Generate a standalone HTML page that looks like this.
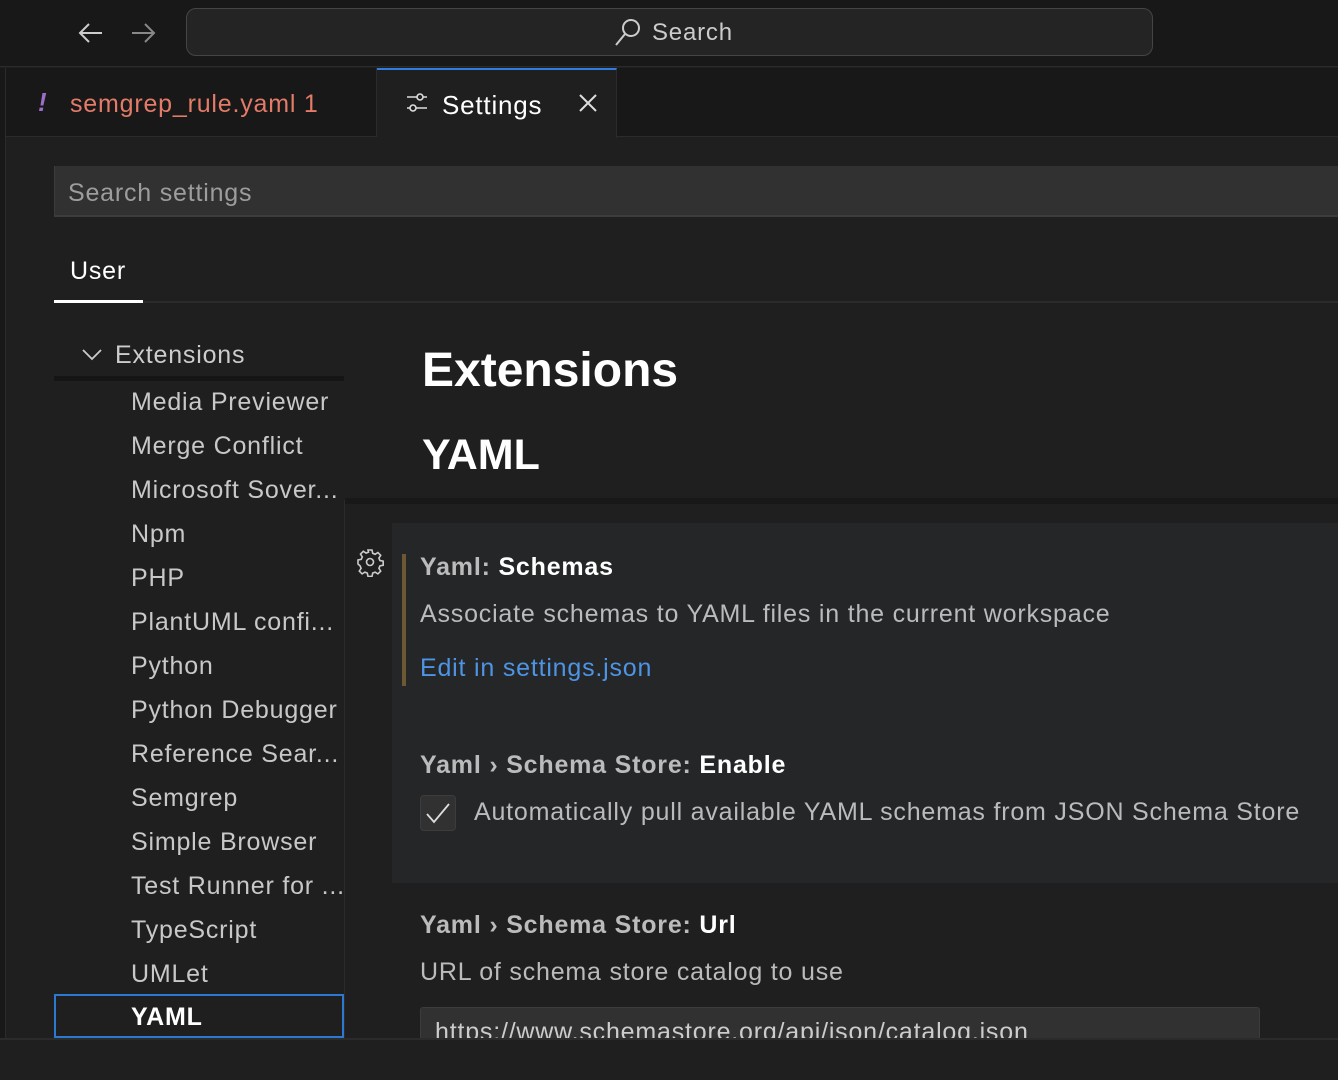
<!DOCTYPE html>
<html><head><meta charset="utf-8"><style>
*{margin:0;padding:0;box-sizing:border-box}
body{width:1338px;height:1080px;overflow:hidden;background:#1f1f1f;font-family:"Liberation Sans",sans-serif;color:#ccc;position:relative;letter-spacing:0.8px}
.a{position:absolute;white-space:nowrap}
</style></head><body>
<!-- title bar -->
<div class="a" style="left:0;top:0;width:1338px;height:67px;background:#181818;border-bottom:1px solid #2b2b2b"></div>
<svg class="a" style="left:76px;top:20px" width="30" height="26" viewBox="0 0 30 26"><path d="M26 13H4M13 4L4 13L13 22" stroke="#ccc" stroke-width="2" fill="none"/></svg>
<svg class="a" style="left:128px;top:20px" width="30" height="26" viewBox="0 0 30 26"><path d="M4 13H26M17 4L26 13L17 22" stroke="#888" stroke-width="2" fill="none"/></svg>
<div class="a" style="left:186px;top:8px;width:967px;height:48px;background:#242424;border:1.5px solid #454545;border-radius:10px"></div>
<svg class="a" style="left:613px;top:17px" width="30" height="30" viewBox="0 0 30 30"><circle cx="18" cy="11" r="8" stroke="#ccc" stroke-width="2" fill="none"/><path d="M12 17L3 28" stroke="#ccc" stroke-width="2"/></svg>
<div class="a" style="left:652px;top:19px;font-size:24px;color:#ccc">Search</div>
<!-- tabs -->
<div class="a" style="left:0;top:68px;width:1338px;height:69px;background:#181818;border-bottom:1px solid #2b2b2b"></div>
<div class="a" style="left:0;top:68px;width:6px;height:972px;background:#181818;border-right:1px solid #2b2b2b"></div>
<div class="a" style="left:6px;top:68px;width:371px;height:69px;border-right:1px solid #2b2b2b"></div>
<div class="a" style="left:38px;top:87px;font-size:26px;color:#9c6ec8;font-style:italic;font-weight:bold">!</div>
<div class="a" style="left:70px;top:90px;font-size:25px;color:#e37b68">semgrep_rule.yaml 1</div>
<div class="a" style="left:377px;top:68px;width:240px;height:70px;background:#1f1f1f;border-top:2px solid #2f7de1;border-right:1px solid #2b2b2b"></div>
<svg class="a" style="left:405px;top:92px" width="24" height="22" viewBox="0 0 24 22"><path d="M2 5H22M2 16H22" stroke="#ddd" stroke-width="1.6"/><circle cx="15" cy="5" r="3" fill="#1f1f1f" stroke="#ddd" stroke-width="1.6"/><circle cx="8" cy="16" r="3" fill="#1f1f1f" stroke="#ddd" stroke-width="1.6"/></svg>
<div class="a" style="left:442px;top:90px;font-size:26px;color:#fff">Settings</div>
<svg class="a" style="left:577px;top:92px" width="22" height="22" viewBox="0 0 22 22"><path d="M3 3L19 19M19 3L3 19" stroke="#ddd" stroke-width="2"/></svg>
<!-- search settings -->
<div class="a" style="left:54px;top:166px;width:1290px;height:51px;background:#313131;border-bottom:2px solid #3c3c3c;border-left:1px solid #3c3c3c"></div>
<div class="a" style="left:68px;top:179px;font-size:25px;color:#9d9d9d">Search settings</div>
<div class="a" style="left:70px;top:257px;font-size:25px;color:#fff">User</div>
<div class="a" style="left:54px;top:301px;width:1290px;height:2px;background:#2b2b2b"></div>
<div class="a" style="left:54px;top:300px;width:89px;height:3px;background:#fff"></div>
<!-- sidebar -->
<svg class="a" style="left:80px;top:345px" width="24" height="20" viewBox="0 0 24 20"><path d="M3 5L12 14L21 5" stroke="#ccc" stroke-width="1.8" fill="none"/></svg>
<div class="a" style="left:115px;top:341px;font-size:25px;color:#ccc">Extensions</div>
<div class="a" style="left:54px;top:376px;width:290px;height:5px;background:#151515"></div>
<div class="a" style="left:344px;top:500px;width:1px;height:540px;background:#2b2b2b"></div>
<div class="a" style="left:131px;top:380px;font-size:25px;line-height:44px;color:#c8c8c8">
Media Previewer<br>Merge Conflict<br>Microsoft Sover...<br>Npm<br>PHP<br>PlantUML confi...<br>Python<br>Python Debugger<br>Reference Sear...<br>Semgrep<br>Simple Browser<br>Test Runner for ...<br>TypeScript<br>UMLet</div>
<div class="a" style="left:54px;top:994px;width:290px;height:44px;border:2px solid #2b79d1"></div>
<div class="a" style="left:131px;top:1003px;font-size:25px;font-weight:bold;color:#fff">YAML</div>
<!-- headings -->
<div class="a" style="left:422px;top:343px;font-size:48px;font-weight:bold;color:#fff;letter-spacing:0">Extensions</div>
<div class="a" style="left:422px;top:431px;font-size:43px;font-weight:bold;color:#fff;letter-spacing:0">YAML</div>
<div class="a" style="left:345px;top:498px;width:1000px;height:6px;background:#181818"></div>
<!-- cards -->
<div class="a" style="left:392px;top:523px;width:946px;height:360px;background:#252628"></div>
<svg class="a" style="left:355px;top:547px" width="30" height="30" viewBox="0 0 30 30"><g stroke="#ccc" stroke-width="1.6" fill="none"><circle cx="15" cy="15" r="3.5"/><path d="M13 3h4l.7 3.3 2.4 1 2.8-1.8 2.8 2.8-1.8 2.8 1 2.4 3.3.7v4l-3.3.7-1 2.4 1.8 2.8-2.8 2.8-2.8-1.8-2.4 1-.7 3.3h-4l-.7-3.3-2.4-1-2.8 1.8-2.8-2.8 1.8-2.8-1-2.4L3 17v-4l3.3-.7 1-2.4-1.8-2.8 2.8-2.8 2.8 1.8 2.4-1z"/></g></svg>
<div class="a" style="left:402px;top:554px;width:4px;height:132px;background:#6d5834"></div>
<div class="a" style="left:420px;top:553px;font-size:25px;font-weight:bold;color:#bbb">Yaml: <span style="color:#fff">Schemas</span></div>
<div class="a" style="left:420px;top:600px;font-size:25px;color:#bbb">Associate schemas to YAML files in the current workspace</div>
<div class="a" style="left:420px;top:654px;font-size:25px;color:#4e94e4">Edit in settings.json</div>
<div class="a" style="left:420px;top:751px;font-size:25px;font-weight:bold;color:#bbb">Yaml › Schema Store: <span style="color:#fff">Enable</span></div>
<div class="a" style="left:420px;top:795px;width:36px;height:36px;background:#313131;border:1px solid #3c3c3c;border-radius:4px"></div>
<svg class="a" style="left:420px;top:795px" width="36" height="36" viewBox="0 0 36 36"><path d="M7 19L14 27L29 9" stroke="#ddd" stroke-width="1.8" fill="none"/></svg>
<div class="a" style="left:474px;top:798px;font-size:25px;color:#bbb">Automatically pull available YAML schemas from JSON Schema Store</div>
<div class="a" style="left:420px;top:911px;font-size:25px;font-weight:bold;color:#bbb">Yaml › Schema Store: <span style="color:#fff">Url</span></div>
<div class="a" style="left:420px;top:958px;font-size:25px;color:#bbb">URL of schema store catalog to use</div>
<div class="a" style="left:420px;top:1007px;width:840px;height:40px;background:#313131;border:1px solid #3c3c3c;border-radius:3px;overflow:hidden"><div style="padding:10px 0 0 14px;font-size:25px;color:#ccc">https://www.schemastore.org/api/json/catalog.json</div></div>
<!-- bottom bar -->
<div class="a" style="left:0;top:1038px;width:1338px;height:42px;background:#1f1f1f;border-top:2px solid #2b2b2b"></div>
</body></html>
